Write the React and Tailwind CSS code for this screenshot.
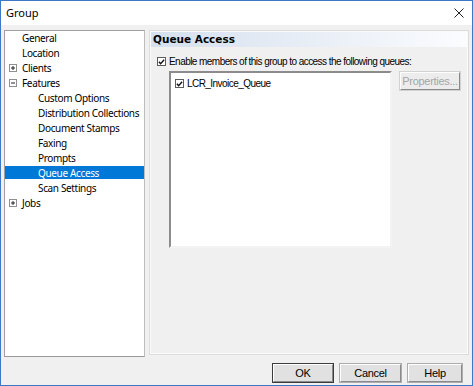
import React from 'react';

const treeItems = [
  { label: 'General', level: 0 },
  { label: 'Location', level: 0 },
  { label: 'Clients', level: 0, expander: 'plus' },
  { label: 'Features', level: 0, expander: 'minus' },
  { label: 'Custom Options', level: 1 },
  { label: 'Distribution Collections', level: 1 },
  { label: 'Document Stamps', level: 1 },
  { label: 'Faxing', level: 1 },
  { label: 'Prompts', level: 1 },
  { label: 'Queue Access', level: 1, selected: true },
  { label: 'Scan Settings', level: 1 },
  { label: 'Jobs', level: 0, expander: 'plus' },
];

const Expander = ({ type }) => (
  <svg width="8" height="8" viewBox="0 0 8 8" className="block">
    <rect x="0.5" y="0.5" width="7" height="7" fill="#fff" stroke="#8f8f8f" />
    <line x1="2" y1="4" x2="6" y2="4" stroke="#222" />
    {type === 'plus' && <line x1="4" y1="2" x2="4" y2="6" stroke="#222" />}
  </svg>
);

const CheckBox = ({ size = 10 }) => (
  <span
    className="flex items-center justify-center bg-white border border-[#5c5c5c] shrink-0"
    style={{ width: size, height: size }}
  >
    <svg width="8" height="8" viewBox="0 0 8 8">
      <path d="M1 3.8 L3 6 L7 1.5" fill="none" stroke="#111" strokeWidth="1.6" />
    </svg>
  </span>
);

const WinButton = ({ children, width, isDefault, disabled }) => (
  <div
    className={`h-[20px] flex items-center justify-center bg-[#e1e1e1] text-[11px] tracking-[-0.3px] ${
      isDefault ? 'border border-[#3c3c3c]' : 'border border-[#adadad]'
    } ${disabled ? 'text-[#a6a6a6] bg-[#ececec] border-[#d2d2d2]' : 'text-black'}`}
    style={{ width }}
  >
    <div className="w-full h-full flex items-center justify-center border-t border-l border-white border-b border-r border-b-[#8a8a8a] border-r-[#8a8a8a]">
      {children}
    </div>
  </div>
);

const App = () => {
  return (
    <div className="w-[473px] h-[386px] border border-[#3c78c6] flex flex-col bg-[#f0f0f0] overflow-hidden">
      {/* title bar */}
      <div className="h-[24px] bg-white flex items-center justify-between pl-[5px] pr-[8px] font-['Noto_Sans',sans-serif] text-[11px] text-black">
        <span>Group</span>
        <svg width="10" height="10" viewBox="0 0 10 10">
          <path d="M0.5 0.5 L9.5 9.5 M9.5 0.5 L0.5 9.5" stroke="#222" strokeWidth="1" />
        </svg>
      </div>

      <div className="flex-1 flex flex-col pt-[5px] px-[3px]">
        <div className="flex gap-[4px] h-[327px]">
          {/* tree */}
          <div className="w-[141px] h-full bg-white border border-[#a0a0a0] border-r-[#bdbdbd] border-b-[#9a9a9a] font-['Noto_Sans',sans-serif] text-[10px] tracking-[-0.35px] text-black">
            {treeItems.map((item, idx) => (
              <div
                key={idx}
                className={`h-[13px] mb-[2px] flex items-center ${
                  item.selected ? 'bg-[#0078d7] text-white' : ''
                }`}
                style={{ paddingLeft: item.level === 1 ? 33 : 4 }}
              >
                {item.level === 0 && (
                  <span className="w-[13px] flex items-center">
                    {item.expander && <Expander type={item.expander} />}
                  </span>
                )}
                <span className="whitespace-nowrap leading-none">{item.label}</span>
              </div>
            ))}
          </div>

          {/* right panel */}
          <div className="flex-1 h-[325px] border border-[#dcdcdc] shadow-[inset_0_0_0_1px_#fafafa] p-[1px] flex flex-col font-['Liberation_Sans',Arial,sans-serif] text-[10px] tracking-[-0.55px] text-black">
            <div className="h-[15px] bg-gradient-to-r from-[#d5e0ee] to-[#fbfcfe] flex items-center pl-[2px] font-['DejaVu_Sans',sans-serif] font-bold text-[10.5px] tracking-normal">
              Queue Access
            </div>

            <div className="flex items-center gap-[3px] pl-[6px] mt-[7px]">
              <CheckBox size={9} />
              <span className="whitespace-nowrap">Enable members of this group to access the following queues:</span>
            </div>

            <div className="flex items-start gap-[7px] pl-[18px] mt-[2px]">
              <div className="w-[223px] h-[177px] bg-white border-2 border-t-[#8c8c8c] border-l-[#8c8c8c] border-r-[#f3f3f3] border-b-[#f3f3f3] pt-[3px] pl-[4px]">
                <div className="flex items-center gap-[3px]">
                  <CheckBox size={9} />
                  <span className="whitespace-nowrap">LCR_Invoice_Queue</span>
                </div>
              </div>
              <WinButton width={62} disabled>
                Properties...
              </WinButton>
            </div>
          </div>
        </div>

        {/* dialog buttons */}
        <div className="flex justify-end gap-[5px] pr-[6px] mt-[6px] font-['Liberation_Sans',Arial,sans-serif]">
          <WinButton width={62} isDefault>OK</WinButton>
          <WinButton width={63}>Cancel</WinButton>
          <WinButton width={56}>Help</WinButton>
        </div>
      </div>
    </div>
  );
};

export default App;
